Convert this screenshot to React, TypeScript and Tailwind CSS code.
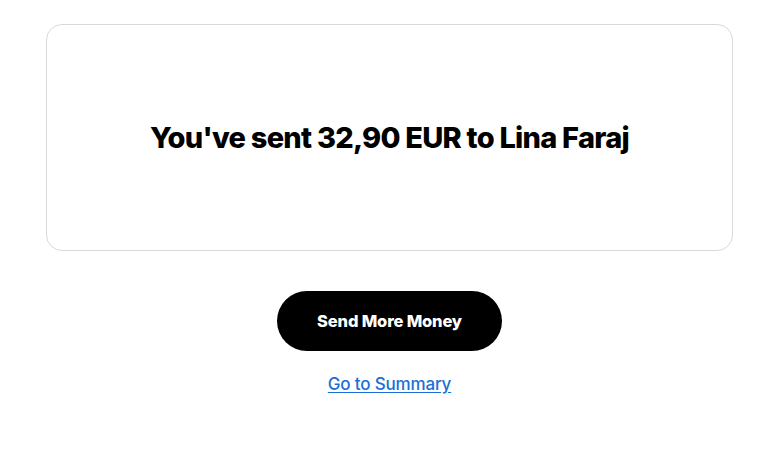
import React from "react";

export default function App() {
  return (
    <div className="min-h-[467px] bg-white pt-6 pl-[46px] pr-[47px]" style={{ fontFamily: "Inter, 'Noto Sans', sans-serif" }}>
      <div className="flex h-[227px] items-center justify-center rounded-2xl border border-[#d9d9d9]">
        <h1 className="text-[29px] font-extrabold tracking-[-0.026em] text-black">You've sent 32,90 EUR to Lina Faraj</h1>
      </div>
      <div className="mt-[40px] flex flex-col items-center">
        <button className="flex h-[60px] w-[225px] items-center justify-center rounded-full bg-black text-[16.5px] font-extrabold tracking-[-0.01em] text-white">
          Send More Money
        </button>
        <a href="#" className="mt-[21px] text-[17px] font-medium tracking-[-0.01em] text-[#1a6fd6] underline underline-offset-2">
          Go to Summary
        </a>
      </div>
    </div>
  );
}
